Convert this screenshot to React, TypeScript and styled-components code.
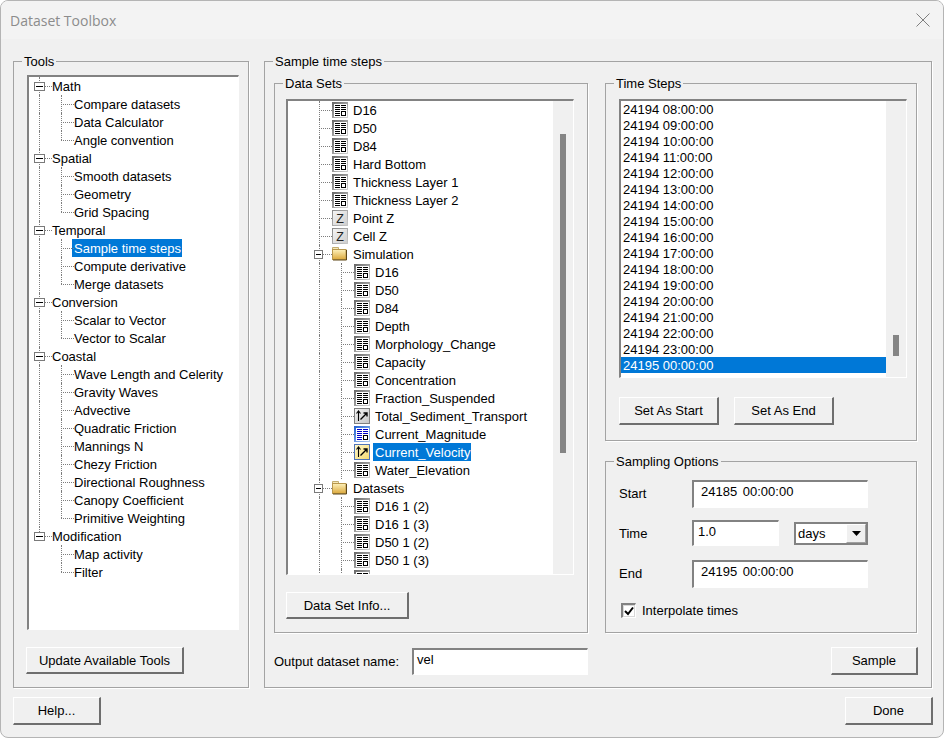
import React from 'react';
import styled, { createGlobalStyle } from 'styled-components';

type IconName = 'grid' | 'gridActive' | 'vector' | 'vectorActive' | 'z' | 'folder';

type Node = {
  label: string;
  icon?: IconName;
  selected?: boolean;
  children?: Node[];
};

const GlobalStyle = createGlobalStyle`
  html, body {
    margin: 0;
    background: #fff;
  }

  body {
    font-family: "Liberation Sans", Arial, sans-serif;
    font-size: 13px;
    color: #000;
  }

  * {
    box-sizing: border-box;
  }
`;

const Frame = styled.div`
  display: flex;
  flex-direction: column;
  width: 944px;
  height: 738px;
  border: 1px solid #b4b4b4;
  border-radius: 8px;
  overflow: hidden;
  background: #f0f0f0;
`;

const TitleBar = styled.header`
  display: flex;
  align-items: center;
  justify-content: space-between;
  flex: none;
  height: 38px;
  padding: 0 13px 0 9px;
  background: #f3f3f3;
  color: #8c8c8c;
  font-family: "Open Sans", sans-serif;
  font-size: 14px;
`;

const Content = styled.main`
  display: flex;
  flex-direction: column;
  gap: 9px;
  padding: 22px 0 0 12px;
`;

const MainRow = styled.div`
  display: grid;
  grid-template-columns: 236px 668px;
  gap: 15px;
  height: 627px;
`;

const Group = styled.section<{ $height?: number; $pad: string }>`
  position: relative;
  height: ${({ $height }) => ($height ? `${$height}px` : '100%')};
  padding: ${({ $pad }) => $pad};
  border: 1px solid #a3a3a3;
  box-shadow: 1px 1px 0 #fff;
`;

const Legend = styled.span`
  position: absolute;
  top: -9px;
  left: 8px;
  padding: 0 2px;
  background: #f0f0f0;
  line-height: 18px;
  white-space: nowrap;
`;

const Sunken = styled.div`
  border-style: solid;
  border-color: #828282 #fff #fff #828282;
  border-width: 2px 1px 1px 2px;
  background: #fff;
`;

const Tree = styled(Sunken)<{ $width: number; $height: number }>`
  width: ${({ $width }) => $width}px;
  height: ${({ $height }) => $height}px;
  overflow: hidden;
`;

const Scrolled = styled(Sunken)<{ $width: number; $height: number }>`
  display: flex;
  width: ${({ $width }) => $width}px;
  height: ${({ $height }) => $height}px;
  overflow: hidden;
`;

const ScrollBody = styled.div<{ $left?: number }>`
  flex: 1;
  min-width: 0;
  padding-left: ${({ $left }) => $left ?? 0}px;
  overflow: hidden;
`;

const ScrollTrack = styled.div`
  flex: none;
  width: 20px;
  padding-left: 7px;
  background: #f0f0f0;
`;

const ScrollThumb = styled.div<{ $top: number; $height: number }>`
  width: 6px;
  height: ${({ $height }) => $height}px;
  margin-top: ${({ $top }) => $top}px;
  background: #858585;
`;

const Row = styled.div`
  display: flex;
  align-items: center;
  height: 18px;
  white-space: nowrap;
`;

const Guide = styled.span<{ $mode: 'none' | 'through' | 'tee' | 'end' }>`
  position: relative;
  flex: none;
  align-self: stretch;
  width: 22px;

  &::before {
    content: '';
    display: ${({ $mode }) => ($mode === 'none' ? 'none' : 'block')};
    position: absolute;
    left: 10px;
    top: 0;
    height: ${({ $mode }) => ($mode === 'end' ? '9px' : '18px')};
    border-left: 1px dotted #7d7d7d;
  }

  &::after {
    content: '';
    display: ${({ $mode }) => ($mode === 'tee' || $mode === 'end' ? 'block' : 'none')};
    position: absolute;
    left: 10px;
    right: -1px;
    top: 9px;
    border-top: 1px dotted #7d7d7d;
  }
`;

const Expander = styled.span<{ $wide?: boolean }>`
  position: absolute;
  z-index: 1;
  left: 5px;
  top: 5px;
  width: ${({ $wide }) => ($wide ? 11 : 9)}px;
  height: 9px;
  border: 1px solid #7a7a7a;
  background: #fff;

  &::after {
    content: '';
    position: absolute;
    left: 1px;
    right: 1px;
    top: 3px;
    height: 1px;
    background: #000;
  }
`;

const NodeIcon = styled.svg`
  flex: none;
  width: 16px;
  height: 16px;
  margin: 0 3px 0 1px;
`;

const Label = styled.span<{ $selected?: boolean; $flush?: boolean }>`
  height: 18px;
  margin-left: ${({ $flush }) => ($flush ? -1 : 0)}px;
  padding: 0 1px 0 2px;
  line-height: 20px;
  background: ${({ $selected }) => ($selected ? '#0078d7' : 'transparent')};
  color: ${({ $selected }) => ($selected ? '#fff' : '#000')};
`;

const Button = styled.button<{ $width: number; $height: number }>`
  flex: none;
  width: ${({ $width }) => $width}px;
  height: ${({ $height }) => $height}px;
  padding: 0;
  border-style: solid;
  border-color: #fff #6e6e6e #6e6e6e #fff;
  border-width: 1px 2px 2px 1px;
  border-radius: 0;
  background: #f0f0f0;
  color: #000;
  font: inherit;
`;

const UpdateButton = styled(Button)`
  margin: 17px 0 0 -1px;
`;

const InfoButton = styled(Button)`
  margin-top: 17px;
`;

const SampleGrid = styled.div`
  display: grid;
  grid-template-columns: 314px 312px;
  gap: 14px 17px;
`;

const RightColumn = styled.div`
  display: flex;
  flex-direction: column;
  gap: 20px;
`;

const ListRow = styled.div<{ $selected?: boolean }>`
  height: 16px;
  padding-left: 2px;
  line-height: 18px;
  white-space: nowrap;
  background: ${({ $selected }) => ($selected ? '#0078d7' : 'transparent')};
  color: ${({ $selected }) => ($selected ? '#fff' : '#000')};
`;

const ButtonRow = styled.div`
  display: flex;
  gap: 15px;
  margin-top: 19px;
`;

const OptionRow = styled.div<{ $height: number; $gap: number }>`
  display: flex;
  align-items: center;
  height: ${({ $height }) => $height}px;
  margin-bottom: ${({ $gap }) => $gap}px;
`;

const OptionLabel = styled.span<{ $lift?: boolean }>`
  flex: none;
  width: 73px;
  padding-bottom: ${({ $lift }) => ($lift ? 2 : 0)}px;
`;

const Field = styled(Sunken)<{ $width: number; $height: number; $pad: number }>`
  flex: none;
  width: ${({ $width }) => $width}px;
  height: ${({ $height }) => $height}px;
  padding-left: ${({ $pad }) => $pad}px;
  line-height: 20px;
  white-space: nowrap;
`;

const TimeField = styled(Field)`
  word-spacing: 2px;
`;

const Combo = styled(Sunken)`
  display: flex;
  align-items: stretch;
  flex: none;
  width: 74px;
  height: 23px;
  margin-left: 15px;
  border-color: #828282;
  border-width: 2px;
  line-height: 20px;
`;

const ComboText = styled.span`
  flex: 1;
  padding-left: 2px;
`;

const ComboArrow = styled.span`
  display: flex;
  align-items: center;
  justify-content: center;
  flex: none;
  width: 20px;
  background: #f0f0f0;
  border-style: solid;
  border-color: #fff #a0a0a0 #a0a0a0 #fff;
  border-width: 1px;
`;

const CheckRow = styled.label`
  display: flex;
  align-items: center;
  gap: 6px;
  margin: 15px 0 0 2px;
`;

const CheckBox = styled(Sunken)`
  display: flex;
  align-items: center;
  justify-content: center;
  width: 15px;
  height: 15px;
  box-shadow: 0 0 0 1px #d8d8d8 inset;
`;

const OutputRow = styled.div`
  display: flex;
  align-items: center;
`;

const OutputLabel = styled.span`
  flex: none;
  width: 138px;
`;

const SampleCell = styled.div`
  display: flex;
  justify-content: flex-end;
  margin-right: -1px;
`;

const Footer = styled.footer`
  display: flex;
  justify-content: space-between;
  width: 920px;
`;

const toolNodes: Node[] = [
  { label: 'Math', children: ['Compare datasets', 'Data Calculator', 'Angle convention'].map((label) => ({ label })) },
  { label: 'Spatial', children: ['Smooth datasets', 'Geometry', 'Grid Spacing'].map((label) => ({ label })) },
  {
    label: 'Temporal',
    children: [
      { label: 'Sample time steps', selected: true },
      { label: 'Compute derivative' },
      { label: 'Merge datasets' }
    ]
  },
  { label: 'Conversion', children: ['Scalar to Vector', 'Vector to Scalar'].map((label) => ({ label })) },
  {
    label: 'Coastal',
    children: [
      'Wave Length and Celerity',
      'Gravity Waves',
      'Advective',
      'Quadratic Friction',
      'Mannings N',
      'Chezy Friction',
      'Directional Roughness',
      'Canopy Coefficient',
      'Primitive Weighting'
    ].map((label) => ({ label }))
  },
  { label: 'Modification', children: ['Map activity', 'Filter'].map((label) => ({ label })) }
];

const grid = (label: string): Node => ({ label, icon: 'grid' });

const dataNodes: Node[] = [
  ...['D16', 'D50', 'D84', 'Hard Bottom', 'Thickness Layer 1', 'Thickness Layer 2'].map(grid),
  { label: 'Point Z', icon: 'z' },
  { label: 'Cell Z', icon: 'z' },
  {
    label: 'Simulation',
    icon: 'folder',
    children: [
      ...[
        'D16',
        'D50',
        'D84',
        'Depth',
        'Morphology_Change',
        'Capacity',
        'Concentration',
        'Fraction_Suspended'
      ].map(grid),
      { label: 'Total_Sediment_Transport', icon: 'vector' },
      { label: 'Current_Magnitude', icon: 'gridActive' },
      { label: 'Current_Velocity', icon: 'vectorActive', selected: true },
      grid('Water_Elevation')
    ]
  },
  {
    label: 'Datasets',
    icon: 'folder',
    children: ['D16 1 (2)', 'D16 1 (3)', 'D50 1 (2)', 'D50 1 (3)', ''].map(grid)
  }
];

const timeSteps = [
  '08', '09', '10', '11', '12', '13', '14', '15', '16', '17', '18', '19', '20', '21', '22', '23'
].map((hour) => `24194 ${hour}:00:00`);

const GridIcon = ({ active }: { active?: boolean }) => {
  const ink = active ? '#0000c8' : '#000';
  const id = active ? 'edgeBlue' : 'edgeGray';
  return (
    <NodeIcon viewBox="0 0 16 16" shapeRendering="crispEdges">
      <defs>
        <linearGradient id={id} x1="0" y1="0" x2="1" y2="1">
          <stop offset="0" stopColor={active ? '#1f5fd0' : '#666'} />
          <stop offset="1" stopColor={active ? '#b4d0f5' : '#d4d4d4'} />
        </linearGradient>
      </defs>
      <rect width="16" height="16" fill={`url(#${id})`} />
      <rect x="2" y="2" width="13" height="13" fill="#fff" />
      <rect x="3" y="3" width="5" height="1" fill={ink} />
      <rect x="9" y="3" width="5" height="1" fill={ink} />
      <rect x="3" y="5" width="5" height="1" fill={ink} />
      <rect x="9" y="5" width="5" height="1" fill={ink} />
      <rect x="3" y="7" width="5" height="1" fill={ink} />
      <rect x="9" y="7" width="5" height="1" fill={ink} />
      <rect x="3" y="9" width="5" height="1" fill={ink} />
      <rect x="3" y="11" width="5" height="1" fill={ink} />
      <rect x="3" y="13" width="5" height="1" fill={ink} />
      <rect x="9.5" y="9.5" width="4" height="4" fill="#fff" stroke="#000" />
    </NodeIcon>
  );
};

const VectorIcon = ({ active }: { active?: boolean }) => {
  const id = active ? 'vecGold' : 'vecGray';
  return (
    <NodeIcon viewBox="0 0 16 16">
      <defs>
        <linearGradient id={id} x1="0" y1="0" x2="1" y2="1">
          <stop offset="0" stopColor={active ? '#fff8cc' : '#f4f4f4'} />
          <stop offset="1" stopColor={active ? '#f4da70' : '#c6c6c6'} />
        </linearGradient>
      </defs>
      <rect x="0.5" y="0.5" width="15" height="15" fill={`url(#${id})`} stroke={active ? '#4f74b8' : '#808080'} />
      <path d="M4.5 13V3M2.5 5.5 4.5 3l2 2.5" fill="none" stroke="#000" strokeWidth="1.1" />
      <path d="M6.5 11.5 12.5 5.5M9.5 5h3.5v3.5" fill="none" stroke="#000" strokeWidth="1.4" />
    </NodeIcon>
  );
};

const ZIcon = () => (
  <NodeIcon viewBox="0 0 16 16">
    <defs>
      <linearGradient id="zEdge" x1="0" y1="0" x2="1" y2="1">
        <stop offset="0" stopColor="#8a8a8a" />
        <stop offset="1" stopColor="#c8c8c8" />
      </linearGradient>
      <linearGradient id="zFill" x1="0" y1="0" x2="1" y2="1">
        <stop offset="0" stopColor="#f6f6f6" />
        <stop offset="1" stopColor="#cdcdcd" />
      </linearGradient>
    </defs>
    <rect x="0.5" y="0.5" width="15" height="15" fill="url(#zFill)" stroke="url(#zEdge)" />
    <text x="8" y="13" textAnchor="middle" fontFamily="Liberation Sans, sans-serif" fontSize="12.5" fill="#222">
      Z
    </text>
  </NodeIcon>
);

const FolderIcon = () => (
  <NodeIcon viewBox="0 0 16 16">
    <defs>
      <linearGradient id="folderFill" x1="0" y1="0" x2="0" y2="1">
        <stop offset="0" stopColor="#fdf1bb" />
        <stop offset="1" stopColor="#dca93c" />
      </linearGradient>
    </defs>
    <path d="M0.5 1.5h6v2h-6z" fill="#f6e8b8" stroke="#c2ad70" />
    <rect x="0.5" y="3.5" width="13.5" height="10" fill="url(#folderFill)" stroke="#b8974c" />
    <path d="M1 14h13.5V4" fill="none" stroke="#5f4716" />
  </NodeIcon>
);

const renderIcon = (icon: IconName) => {
  switch (icon) {
    case 'grid':
      return <GridIcon />;
    case 'gridActive':
      return <GridIcon active />;
    case 'vector':
      return <VectorIcon />;
    case 'vectorActive':
      return <VectorIcon active />;
    case 'z':
      return <ZIcon />;
    default:
      return <FolderIcon />;
  }
};

// walks the nodes and draws the dotted guides of every row. clipped means the
// list goes on below the visible part, so the lines never end
const renderNodes = (
  nodes: Node[],
  parents: boolean[],
  clipped: boolean,
  wide: boolean
): React.ReactNode[] =>
  nodes.flatMap((node, i) => {
    const hasNext = i < nodes.length - 1 || clipped;
    const row = (
      <Row key={`${parents.length}-${i}-${node.label}`}>
        {parents.map((more, j) => (
          <Guide key={j} $mode={more ? 'through' : 'none'} />
        ))}
        <Guide $mode={hasNext ? 'tee' : 'end'}>
          {node.children && <Expander $wide={wide} />}
        </Guide>
        {node.icon && renderIcon(node.icon)}
        {node.label && (
          <Label $selected={node.selected} $flush={!node.icon}>
            {node.label}
          </Label>
        )}
      </Row>
    );
    return [
      row,
      ...(node.children ? renderNodes(node.children, [...parents, hasNext], clipped, wide) : [])
    ];
  });

const App: React.FC = () => (
  <Frame>
    <GlobalStyle />
    <TitleBar>
      Dataset Toolbox
      <svg width="14" height="14" viewBox="0 0 14 14">
        <path d="M0.5 0.5 13.5 13.5M13.5 0.5 0.5 13.5" stroke="#7f7f7f" strokeWidth="1" />
      </svg>
    </TitleBar>

    <Content>
      <MainRow>
        <Group $pad="13px 0 0 13px">
          <Legend>Tools</Legend>
          <Tree $width={212} $height={555}>
            {renderNodes(toolNodes, [], false, true)}
          </Tree>
          <UpdateButton $width={158} $height={27}>
            Update Available Tools
          </UpdateButton>
        </Group>

        <Group $pad="21px 14px 0 9px">
          <Legend>Sample time steps</Legend>
          <SampleGrid>
            <Group $height={550} $pad="15px 0 0 11px">
              <Legend>Data Sets</Legend>
              <Scrolled $width={288} $height={476}>
                <ScrollBody $left={21}>
                  {renderNodes(dataNodes, [], true, false)}
                </ScrollBody>
                <ScrollTrack>
                  <ScrollThumb $top={33} $height={319} />
                </ScrollTrack>
              </Scrolled>
              <InfoButton $width={123} $height={27}>
                Data Set Info...
              </InfoButton>
            </Group>

            <RightColumn>
              <Group $height={358} $pad="15px 0 0 13px">
                <Legend>Time Steps</Legend>
                <Scrolled $width={288} $height={279}>
                  <ScrollBody>
                    {timeSteps.map((step) => (
                      <ListRow key={step}>{step}</ListRow>
                    ))}
                    <ListRow $selected>24195 00:00:00</ListRow>
                  </ScrollBody>
                  <ScrollTrack>
                    <ScrollThumb $top={234} $height={21} />
                  </ScrollTrack>
                </Scrolled>
                <ButtonRow>
                  <Button $width={100} $height={28}>Set As Start</Button>
                  <Button $width={100} $height={28}>Set As End</Button>
                </ButtonRow>
              </Group>

              <Group $height={172} $pad="18px 0 0 13px">
                <Legend>Sampling Options</Legend>
                <OptionRow $height={28} $gap={12}>
                  <OptionLabel $lift>Start</OptionLabel>
                  <TimeField $width={176} $height={28} $pad={7}>24185 00:00:00</TimeField>
                </OptionRow>
                <OptionRow $height={26} $gap={14}>
                  <OptionLabel>Time</OptionLabel>
                  <Field $width={87} $height={26} $pad={4}>1.0</Field>
                  <Combo>
                    <ComboText>days</ComboText>
                    <ComboArrow>
                      <svg width="9" height="5" viewBox="0 0 9 5">
                        <path d="M0 0h9L4.5 5z" fill="#000" />
                      </svg>
                    </ComboArrow>
                  </Combo>
                </OptionRow>
                <OptionRow $height={28} $gap={0}>
                  <OptionLabel $lift>End</OptionLabel>
                  <TimeField $width={176} $height={28} $pad={7}>24195 00:00:00</TimeField>
                </OptionRow>
                <CheckRow>
                  <CheckBox>
                    <svg width="10" height="10" viewBox="0 0 10 10">
                      <path d="M1 5 4 8 9 1.5" fill="none" stroke="#000" strokeWidth="2" />
                    </svg>
                  </CheckBox>
                  Interpolate times
                </CheckRow>
              </Group>
            </RightColumn>

            <OutputRow>
              <OutputLabel>Output dataset name:</OutputLabel>
              <Field $width={176} $height={27} $pad={3}>vel</Field>
            </OutputRow>
            <SampleCell>
              <Button $width={87} $height={28}>Sample</Button>
            </SampleCell>
          </SampleGrid>
        </Group>
      </MainRow>

      <Footer>
        <Button $width={88} $height={28}>Help...</Button>
        <Button $width={88} $height={28}>Done</Button>
      </Footer>
    </Content>
  </Frame>
);

export default App;
